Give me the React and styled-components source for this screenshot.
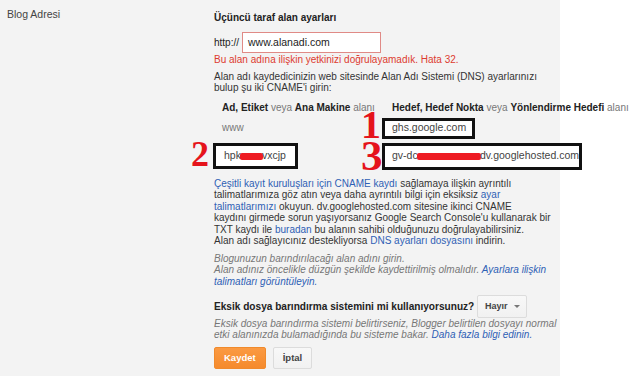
import React from "react";
import styled, { createGlobalStyle } from "styled-components";

const Global = createGlobalStyle`
  html, body { margin: 0; padding: 0; background: #ffffff; }
  body { font-family: "Liberation Sans", Arial, sans-serif; color: #222; }
`;

const Panel = styled.div`
  width: 560px;
  height: 376px;
  background: #f3f3f3;
  display: grid;
  grid-template-columns: 214px auto;
  font-size: 10px;
  line-height: 11.5px;
`;

const Label = styled.div`
  padding: 8px 0 0 7px;
  font-size: 10.5px;
  line-height: 12px;
  color: #444;
`;

const Content = styled.div`
  padding-top: 12px;
  display: flex;
  flex-direction: column;
  align-items: flex-start;
`;

const Title = styled.div`
  font-weight: bold;
  font-size: 10px;
  line-height: 12px;
  color: #222;
`;

const UrlRow = styled.div`
  margin-top: 8px;
  display: flex;
  align-items: center;
  gap: 3px;
  color: #222;
`;

const UrlInput = styled.div`
  width: 132px;
  height: 19px;
  border: 1px solid #e08a86;
  background: #fff;
  padding-left: 5px;
  display: flex;
  align-items: center;
  font-size: 10.5px;
  color: #222;
`;

const Error = styled.div`
  margin-top: 1px;
  color: #dd3b30;
`;

const Text = styled.div`
  margin-top: ${(p) => p.$mt || 0}px;
  line-height: ${(p) => p.$lh || 11.5}px;
  color: #333;
  white-space: nowrap;
`;

const Help = styled(Text)`
  font-style: italic;
  color: #777;
`;

const Link = styled.span`
  color: #2f5fb5;
`;

const Table = styled.div`
  margin-top: 9px;
  display: grid;
  grid-template-columns: 168px auto;
  row-gap: 4px;
  align-items: center;
`;

const Head = styled.div`
  padding-left: ${(p) => p.$pl}px;
  white-space: nowrap;
  line-height: 12px;
  color: #777;
  b { color: #222; }
`;

const Plain = styled.div`
  padding-left: 8px;
  color: #777;
`;

const Cell = styled.div`
  position: relative;
  margin-left: ${(p) => p.$ml || 0}px;
`;

const Boxed = styled.div`
  position: relative;
  width: ${(p) => p.$w}px;
  height: ${(p) => p.$h}px;
  box-sizing: border-box;
  border: 3px solid #111;
  background: #fff;
  padding-left: ${(p) => p.$pl || 7}px;
  display: flex;
  align-items: center;
  font-size: 10.5px;
  color: #444;
  white-space: nowrap;
`;

const Redact = styled.span`
  display: inline-block;
  width: ${(p) => p.$w}px;
  height: 7px;
  background: #ee1c24;
  border-radius: 2px;
  vertical-align: middle;
  margin: 0 -1px;
`;

const Num = styled.span`
  position: absolute;
  left: ${(p) => p.$x}px;
  top: ${(p) => p.$y}px;
  font-family: "Liberation Serif", "Times New Roman", serif;
  font-weight: bold;
  font-size: ${(p) => p.$fs || 40}px;
  line-height: 0.62;
  color: #e5131b;
`;

const QuestionRow = styled.div`
  margin-top: 8px;
  display: flex;
  align-items: center;
  gap: 3px;
`;

const Question = styled.div`
  font-weight: bold;
  font-size: 10.1px;
  color: #222;
`;

const Select = styled.div`
  height: 23px;
  width: 50px;
  box-sizing: border-box;
  border: 1px solid #dcdcdc;
  border-radius: 2px;
  background: linear-gradient(#f8f8f8, #f1f1f1);
  display: flex;
  align-items: center;
  justify-content: center;
  gap: 6px;
  font-size: 9px;
  font-weight: bold;
  color: #444;
`;

const Caret = styled.span`
  width: 0;
  height: 0;
  border-left: 3px solid transparent;
  border-right: 3px solid transparent;
  border-top: 3px solid #777;
`;

const Buttons = styled.div`
  margin-top: 7px;
  display: flex;
  gap: 7px;
`;

const Button = styled.div`
  height: 22px;
  box-sizing: border-box;
  padding: 0 9px;
  border: 1px solid ${(p) => (p.$primary ? "#f08a2c" : "#dcdcdc")};
  border-radius: 2px;
  background: ${(p) =>
    p.$primary ? "linear-gradient(#fb9a42, #f58a2c)" : "linear-gradient(#f8f8f8, #f1f1f1)"};
  color: ${(p) => (p.$primary ? "#fff" : "#444")};
  font-size: 9.5px;
  font-weight: bold;
  display: flex;
  align-items: center;
  justify-content: center;
`;

export default function App() {
  return (
    <>
      <Global />
      <Panel>
        <Label>Blog Adresi</Label>
        <Content>
          <Title>Üçüncü taraf alan ayarları</Title>
          <UrlRow>
            <span>http://</span>
            <UrlInput>www.alanadi.com</UrlInput>
          </UrlRow>
          <Error>Bu alan adına ilişkin yetkinizi doğrulayamadık. Hata 32.</Error>
          <Text $mt={5} $lh={11}>
            Alan adı kaydedicinizin web sitesinde Alan Adı Sistemi (DNS) ayarlarınızı
            <br />
            bulup şu iki CNAME'i girin:
          </Text>
          <Table>
            <Head $pl={8}>
              <b>Ad, Etiket</b> veya <b>Ana Makine</b> alanı
            </Head>
            <Head $pl={10}>
              <b>Hedef, Hedef Nokta</b> veya <b>Yönlendirme Hedefi</b> alanı
            </Head>
            <Plain>www</Plain>
            <Cell>
              <Num $x={-21} $y={-5}>1</Num>
              <Boxed $w={93} $h={21}>ghs.google.com</Boxed>
            </Cell>
            <Cell $ml={-1}>
              <Num $x={-22} $y={0} $fs={36}>2</Num>
              <Boxed $w={85} $h={26} $pl={8}>
                hpk<Redact $w={23} />vxcjp
              </Boxed>
            </Cell>
            <Cell>
              <Num $x={-21} $y={0} $fs={43}>3</Num>
              <Boxed $w={200} $h={27}>
                gv-dc<Redact $w={66} />dv.googlehosted.com
              </Boxed>
            </Cell>
          </Table>
          <Text $mt={8}>
            <Link>Çeşitli kayıt kuruluşları için CNAME kaydı</Link> sağlamaya ilişkin ayrıntılı
            <br />
            talimatlarımıza göz atın veya daha ayrıntılı bilgi için eksiksiz <Link>ayar</Link>
            <br />
            <Link>talimatlarımızı</Link> okuyun. dv.googlehosted.com sitesine ikinci CNAME
            <br />
            kaydını girmede sorun yaşıyorsanız Google Search Console'u kullanarak bir
            <br />
            TXT kaydı ile <Link>buradan</Link> bu alanın sahibi olduğunuzu doğrulayabilirsiniz.
            <br />
            Alan adı sağlayıcınız destekliyorsa <Link>DNS ayarları dosyasını</Link> indirin.
          </Text>
          <Help $mt={6}>
            Blogunuzun barındırılacağı alan adını girin.
            <br />
            Alan adınız öncelikle düzgün şekilde kaydettirilmiş olmalıdır. <Link>Ayarlara ilişkin</Link>
            <br />
            <Link>talimatları görüntüleyin.</Link>
          </Help>
          <QuestionRow>
            <Question>Eksik dosya barındırma sistemini mi kullanıyorsunuz?</Question>
            <Select>
              Hayır <Caret />
            </Select>
          </QuestionRow>
          <Help $lh={11}>
            Eksik dosya barındırma sistemi belirtirseniz, Blogger belirtilen dosyayı normal
            <br />
            etki alanınızda bulamadığında bu sisteme bakar. <Link>Daha fazla bilgi edinin.</Link>
          </Help>
          <Buttons>
            <Button $primary>Kaydet</Button>
            <Button>İptal</Button>
          </Buttons>
        </Content>
      </Panel>
    </>
  );
}
